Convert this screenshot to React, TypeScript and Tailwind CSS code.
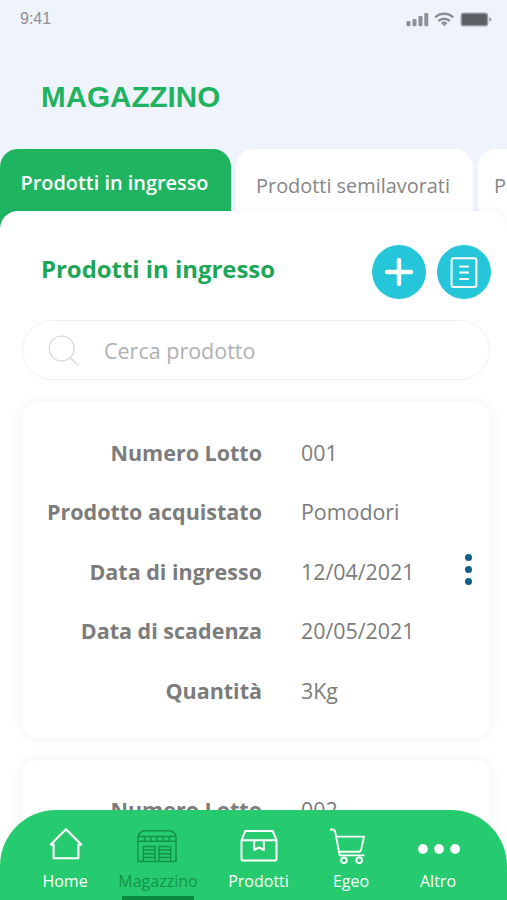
import { useState } from 'react';

type Lot = { lotto: string; prodotto: string; ingresso: string; scadenza: string; quantita: string };

const LOTS: Lot[] = [
  { lotto: '001', prodotto: 'Pomodori', ingresso: '12/04/2021', scadenza: '20/05/2021', quantita: '3Kg' },
];

const FIELDS: { key: keyof Lot; label: string }[] = [
  { key: 'lotto',    label: 'Numero Lotto' },
  { key: 'prodotto', label: 'Prodotto acquistato' },
  { key: 'ingresso', label: 'Data di ingresso' },
  { key: 'scadenza', label: 'Data di scadenza' },
  { key: 'quantita', label: 'Quantità' },
];

function StatusIcons() {
  return (
    <svg width="88" height="18" viewBox="0 0 88 18" fill="#8e9096">
      <rect x="1.5" y="11" width="4" height="5.3" rx="1.2" />
      <rect x="7.5" y="9" width="4" height="7.3" rx="1.2" />
      <rect x="13.5" y="6" width="4" height="10.3" rx="1.2" />
      <rect x="19.3" y="3" width="4" height="13.3" rx="1.2" />
      <g fill="none" stroke="#8e9096" strokeWidth="2.5">
        <path d="M30.2 7.3a13 13 0 0 1 18 0" />
        <path d="M33.5 11a8.3 8.3 0 0 1 11.4 0" />
      </g>
      <path d="M36 13a4.8 4.8 0 0 1 6.4 0l-3.2 3.2z" />
      <rect x="56.3" y="3.2" width="26.2" height="12.6" rx="2.6" fill="#5c5f63" stroke="#9a9ca1" strokeWidth="1.5" />
      <path d="M84.3 7.2v4.6q2-.8 2-2.3t-2-2.3z" />
    </svg>
  );
}

function HomeIcon() {
  return (
    <svg width="34" height="34" viewBox="0 0 34 34" fill="none" stroke="#fff" strokeWidth="2.1" strokeLinejoin="round" className="mb-[3px] ml-[2px]">
      <path d="M1.8 17.6 17 2.2l15.2 15.4h-2.8v13.6H4.6V17.6z" />
    </svg>
  );
}

function WarehouseIcon() {
  return (
    <svg width="40" height="34" viewBox="0 0 40 34" fill="none" stroke="#139349" strokeWidth="1.5" strokeLinejoin="round" className="mr-[2px]">
      <path d="M1 32.4V8q.4-4.6 5.5-6.3h27Q38.600 3.400 39 8v24.400z" />
      <path d="M1 7.5h38M1 12.2h38M7.6 7.5v4.7M13.8 7.5v4.7M20 7.5v4.7M26.2 7.5v4.7M32.4 7.5v4.7" />
      <path d="M6.300 32V17.500H18V32M22 32V17.500h11.700V32M6.300 21h11.700M6.300 24.700h11.700M6.300 28.400h11.700M22 21h11.700M22 24.700h11.700M22 28.400h11.700" />
    </svg>
  );
}

function BoxIcon() {
  return (
    <svg width="38" height="34" viewBox="0 0 38 34" fill="none" stroke="#fff" strokeWidth="2" strokeLinejoin="round">
      <path d="M1.5 11.2 5.3 2h27.4l3.8 9.2v18.600a1.800 1.800 0 0 1-1.800 1.800H3.300a1.800 1.800 0 0 1-1.800-1.800z" />
      <path d="M1.500 11.200h35M14.200 11.200v9.800l4.800-2.600 4.800 2.600v-9.800" />
    </svg>
  );
}

function CartIcon() {
  return (
    <svg width="36" height="38" viewBox="0 0 36 38" fill="none" stroke="#fff" strokeWidth="1.9" strokeLinejoin="round" strokeLinecap="round" className="mr-[8px]">
      <path d="M1.800 2.500h2q1.800 0 2.300 1.900l4.600 24h24" />
      <path d="M7 9.600h28l-2.800 12.800q-.7 2.400-2.900 2.400H10" />
      <circle cx="15" cy="33.300" r="2.800" />
      <circle cx="30.200" cy="33.300" r="2.800" />
    </svg>
  );
}

function DotsIcon() {
  return (
    <svg width="44" height="12" viewBox="0 0 44 12" fill="#fff" className="mt-[7px] ml-[1px]">
      <circle cx="5.9" cy="6" r="4.9" />
      <circle cx="22" cy="6" r="4.9" />
      <circle cx="38.1" cy="6" r="4.9" />
    </svg>
  );
}

const NAV = [
  { label: 'Home',      icon: <HomeIcon />,      width: 'w-[94px]' },
  { label: 'Magazzino', icon: <WarehouseIcon />, width: 'w-[92px]' },
  { label: 'Prodotti',  icon: <BoxIcon />,       width: 'w-[109px]' },
  { label: 'Egeo',      icon: <CartIcon />,      width: 'w-[76px]' },
  { label: 'Altro',     icon: <DotsIcon />,      width: 'w-[98px]' },
];

function LotRow({ label, value }: { label: string; value: string }) {
  return (
    <div className="grid h-[59.5px] grid-cols-[240px_1fr] items-center gap-[39px] text-[21.5px] text-[#7c7c7c]">
      <dt className="text-right font-bold whitespace-nowrap">{label}</dt>
      <dd className="text-[21.4px]">{value}</dd>
    </div>
  );
}

function LotCard({ lot }: { lot: Lot }) {
  return (
    <article className="relative h-[336px] shrink-0 rounded-[16px] bg-white pt-[21.2px] shadow-[0_0_14px_rgba(60,60,120,0.07)]">
      <dl>
        {FIELDS.map(f => <LotRow key={f.key} label={f.label} value={lot[f.key]} />)}
      </dl>
      <button aria-label="Azioni" className="absolute top-[152px] right-[18px] flex flex-col items-center gap-[5px]">
        <span className="size-[7px] rounded-full bg-[#135e8a]" />
        <span className="size-[7px] rounded-full bg-[#135e8a]" />
        <span className="size-[7px] rounded-full bg-[#135e8a]" />
      </button>
    </article>
  );
}

export default function App() {
  const [query, setQuery] = useState('');

  return (
    <div className="relative flex h-[900px] w-[507px] flex-col overflow-hidden bg-[#eff3fc] font-['Open_Sans',sans-serif]">
      <header className="h-[149px] shrink-0">
        <div className="flex h-[38px] items-center justify-between pr-[14px] pl-[20px]">
          <span className="font-['Liberation_Sans',sans-serif] text-[16px] text-[#8e9096]">9:41</span>
          <StatusIcons />
        </div>
        <h1 className="pt-[42px] pl-[41px] font-['Liberation_Sans',sans-serif] text-[29.6px] leading-[34px] font-bold text-[#1fb35f]">MAGAZZINO</h1>
      </header>

      <nav className="flex h-[100px] shrink-0 gap-[5px] whitespace-nowrap">
        <button className="w-[231px] shrink-0 rounded-t-[18px] bg-[#1fb560] pr-[2px] pb-[32px] text-[19.9px] font-semibold text-white">Prodotti in ingresso</button>
        <button className="w-[237px] shrink-0 rounded-t-[18px] bg-white pr-[3px] pb-[26px] text-[19.9px] text-[#858585]">Prodotti semilavorati</button>
        <button className="w-[29px] shrink-0 rounded-tl-[18px] bg-white pb-[26px] pl-[16px] text-left text-[19.9px] text-[#858585]">P</button>
      </nav>

      <main className="-mt-[38px] flex min-h-0 flex-1 flex-col rounded-t-[18px] bg-white pr-[16px] pl-[22px] shadow-[0_0_6px_rgba(60,60,120,0.08)]">
        <div className="flex h-[109px] shrink-0 items-center pt-[13px]">
          <h2 className="flex-1 pb-[7px] pl-[19px] text-[23.9px] font-bold text-[#1ba757]">Prodotti in ingresso</h2>
          <div className="flex gap-[11px]">
            <button aria-label="Aggiungi" className="flex size-[54px] items-center justify-center rounded-full bg-[#26c6da]">
              <svg width="30" height="30" viewBox="0 0 30 30" stroke="#fff" strokeWidth="4.4" strokeLinecap="round">
                <path d="M15 3v24M3 15h24" />
              </svg>
            </button>
            <button aria-label="Elenco" className="flex size-[54px] items-center justify-center rounded-full bg-[#26c6da]">
              <svg width="28" height="32" viewBox="0 0 28 32" fill="none" stroke="#fff" strokeWidth="2">
                <rect x="1.6" y="2.2" width="24.8" height="28.8" rx="2" />
                <path d="M9.3 10.6h9.6M9.3 16.6h9.6M9.3 22.9h9.6" />
              </svg>
            </button>
          </div>
        </div>

        <label className="flex h-[60px] w-[468px] shrink-0 items-center rounded-full border border-[#f1f1f3] bg-white pl-[25px]">
          <svg width="32" height="32" viewBox="0 0 32 32" fill="none" stroke="#d9d9d9" strokeWidth="1.3" strokeLinecap="round" className="mt-[2px]">
            <circle cx="13.7" cy="13.6" r="12.4" />
            <path d="m22.3 22.6 7.3 7.3" />
          </svg>
          <input
            value={query}
            onChange={e => setQuery(e.target.value)}
            placeholder="Cerca prodotto"
            className="ml-[24px] w-[340px] pt-[2.5px] text-[21.5px] text-[#7c7c7c] outline-none placeholder:text-[#b0b0b0]"
          />
        </label>

        <section className="mt-[22px] flex w-[468px] flex-col gap-[22px]">
          {LOTS.map(lot => <LotCard key={lot.lotto} lot={lot} />)}
          <article className="h-[80px] shrink-0 rounded-t-[16px] bg-white pt-[20.5px] shadow-[0_0_14px_rgba(60,60,120,0.07)]">
            <dl><LotRow label="Numero Lotto" value="002" /></dl>
          </article>
        </section>
      </main>

      {/* Bottom bar floats over the scrolling list */}
      <nav className="absolute inset-x-0 bottom-0 flex h-[90px] rounded-t-[56px] bg-[#27cb6f] pl-[18px]">
        {NAV.map(item => (
          <button key={item.label} className={`${item.width} flex shrink-0 flex-col items-center`}>
            <span className="flex h-[57px] items-center pt-[14px]">{item.icon}</span>
            <span className={`mt-[3px] text-[16px] leading-[22px] ${item.label === 'Magazzino' ? 'text-[#139349]' : 'text-white'}`}>{item.label}</span>
            {item.label === 'Magazzino' && <span className="mt-[4px] mr-[1px] h-[4px] w-[72px] bg-[#0b8a3f]" />}
          </button>
        ))}
      </nav>
    </div>
  );
}
